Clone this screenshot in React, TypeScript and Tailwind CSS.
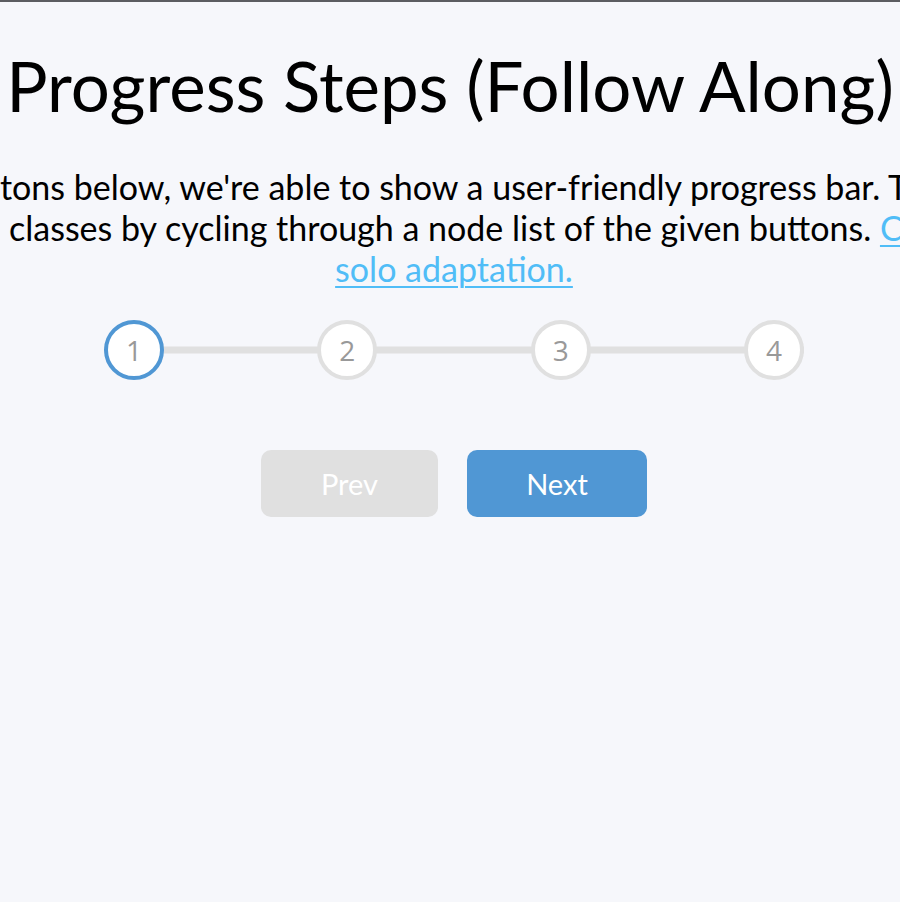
import { useState } from "react";

const steps = [1, 2, 3, 4];

export default function App() {
    const [active, setActive] = useState(1);

    const progressWidth = ((active - 1) / (steps.length - 1)) * 100;

    return (
        <div className="min-h-[902px] w-full overflow-hidden bg-[#f6f7fb] border-t-2 border-[#5c5d61] font-['Lato',sans-serif] text-black">
            <div className="flex flex-col items-center pl-2">
                <h1 className="mt-[44px] whitespace-nowrap text-[69px] leading-[80px] -ml-2">
                    Progress Steps (Follow Along)
                </h1>

                <div className="mt-[40px] w-full text-[34px] leading-[41px]">
                    <div className="flex justify-center whitespace-nowrap">
                        <span className="inline-block w-[240px] shrink-0 text-right">Using the but</span>
                        <span>tons below, we're able to show a user-friendly progress bar. T</span>
                        <span className="inline-block w-[240px] shrink-0 text-left">he script</span>
                    </div>
                    <div className="flex justify-center whitespace-nowrap">
                        <span className="inline-block w-[243px] shrink-0 text-right">the active</span>
                        <span>
                            &nbsp;classes by cycling through a node list of the given buttons.{" "}
                            <a href="#" className="text-[#50bdf7] underline decoration-2 underline-offset-4">Cl</a>
                        </span>
                        <span className="inline-block w-[240px] shrink-0 text-left">
                            <a href="#" className="text-[#50bdf7] underline decoration-2 underline-offset-4">ick here for my</a>
                        </span>
                    </div>
                    <div className="flex justify-center whitespace-nowrap">
                        <a href="#" className="text-[#50bdf7] underline decoration-2 underline-offset-4">solo adaptation.</a>
                    </div>
                </div>

                <div className="relative mt-[31px] flex w-[700px] justify-between">
                    <div className="absolute left-0 top-1/2 h-[7px] w-full -translate-y-1/2 bg-[#e0e0e0]" />
                    <div
                        className="absolute left-0 top-1/2 h-[7px] -translate-y-1/2 bg-[#5097d4]"
                        style={{ width: `${progressWidth}%` }}
                    />
                    {steps.map((n) => (
                        <div
                            key={n}
                            className={`relative flex h-[60px] w-[60px] items-center justify-center rounded-full border-[4px] bg-white font-['Open_Sans',sans-serif] text-[28px] text-[#999999] ${
                                n <= active ? "border-[#5097d4]" : "border-[#e0e0e0]"
                            }`}
                        >
                            {n}
                        </div>
                    ))}
                </div>

                <div className="mt-[70px] flex gap-[29px]">
                    <button
                        type="button"
                        disabled={active === 1}
                        onClick={() => setActive((a) => Math.max(1, a - 1))}
                        className="h-[67px] w-[177px] rounded-[10px] bg-[#5097d4] text-[29px] text-white disabled:bg-[#e0e0e0] cursor-pointer disabled:cursor-not-allowed"
                    >
                        Prev
                    </button>
                    <button
                        type="button"
                        disabled={active === steps.length}
                        onClick={() => setActive((a) => Math.min(steps.length, a + 1))}
                        className="h-[67px] w-[180px] rounded-[10px] bg-[#5097d4] text-[29px] text-white disabled:bg-[#e0e0e0] cursor-pointer disabled:cursor-not-allowed"
                    >
                        Next
                    </button>
                </div>
            </div>
        </div>
    );
}
